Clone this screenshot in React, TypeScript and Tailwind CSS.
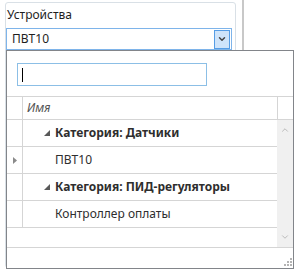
import { ChevronDown, ChevronUp } from 'lucide-react';

const rows = [
  { text: 'Категория: Датчики', group: true },
  { text: 'ПВТ10', current: true },
  { text: 'Категория: ПИД-регуляторы', group: true },
  { text: 'Контроллер оплаты' },
];

function ExpandedMark() {
  return (
    <svg width="6" height="6" viewBox="0 0 6 6" className="shrink-0">
      <polygon points="6,0 6,6 0,6" fill="#595959" />
    </svg>
  );
}

function RowMark() {
  return (
    <svg width="4" height="7" viewBox="0 0 4 7">
      <polygon points="0,0 4,3.5 0,7" fill="#8a8a8a" />
    </svg>
  );
}

function Grip() {
  const dots = [
    [6, 0],
    [3, 3], [6, 3],
    [0, 6], [3, 6], [6, 6],
  ];
  return (
    <svg width="8" height="8" viewBox="0 0 8 8">
      {dots.map(([x, y], i) => (
        <rect key={i} x={x} y={y} width="2" height="2" fill="#b4b4b4" />
      ))}
    </svg>
  );
}

export default function App() {
  return (
    <div className="relative w-[294px] h-[270px] bg-white overflow-hidden flex font-['Noto_Sans',sans-serif] text-[12px] text-[#333]">
      {/* group box */}
      <div className="ml-[5px] mt-[2px] w-[231px] h-[266px] border border-[#d9e0e6] rounded-[3px] pr-[3px]">
        <div className="h-[25px] pl-[1px] pt-[4px] text-[#1e1e1e] leading-[16px]">Устройства</div>
        <div className="h-[22px] border border-[#7eb4ea] flex items-center justify-between pl-[5px] pr-[1px] text-[#1e1e1e]">
          <span className="leading-[16px]">ПВТ10</span>
          <div className="w-[16px] h-[19px] border border-[#569de5] bg-[#cfe4fa] flex items-center justify-center">
            <ChevronDown className="w-[10px] h-[10px] text-[#444]" strokeWidth={3.5} />
          </div>
        </div>
      </div>
      <div className="ml-[6px] w-[2px] h-[50px] bg-[#c8c8c8]" />

      {/* dropdown popup */}
      <div className="absolute left-[6px] top-[50px] w-[288px] h-[219px] border border-[#82858a] bg-white flex flex-col">
        <div className="h-[45px] pl-[10px] pt-[12px]">
          <div className="w-[190px] h-[23px] border border-[#8cbfe6] flex items-center pl-[4px]">
            <div className="w-[1px] h-[14px] bg-black" />
          </div>
        </div>

        <div className="flex-1 flex flex-col border-t border-[#d5d5d5]">
          {/* header */}
          <div className="h-[23px] flex border-b border-[#d5d5d5]">
            <div className="w-[16px] border-r border-[#d5d5d5]" />
            <div className="flex-1 flex items-center pl-[4px] italic text-[#555]">Имя</div>
            <div className="w-[16px] border-l border-[#d5d5d5]" />
          </div>

          {/* body */}
          <div className="flex-1 flex">
            <div className="flex-1 flex flex-col">
              {rows.map((r, i) => (
                <div key={i} className="h-[27px] flex border-b border-[#d5d5d5]">
                  <div className="w-[16px] border-r border-[#d5d5d5] flex items-center justify-center">
                    {r.current && <RowMark />}
                  </div>
                  <div className="flex-1 flex items-center pl-[32px]">
                    {r.group ? (
                      <div className="flex items-center gap-[5px] -ml-[11px]">
                        <ExpandedMark />
                        <span className="font-bold text-[#2e2e2e]">{r.text}</span>
                      </div>
                    ) : (
                      <span className="text-[#2e2e2e]">{r.text}</span>
                    )}
                  </div>
                </div>
              ))}
            </div>
            <div className="w-[16px] bg-[#f0f0f0] flex flex-col items-center justify-between py-[5px]">
              <ChevronUp className="w-[10px] h-[10px] text-[#b0b0b0]" strokeWidth={2} />
              <ChevronDown className="w-[10px] h-[10px] text-[#b0b0b0]" strokeWidth={2} />
            </div>
          </div>

          {/* footer */}
          <div className="h-[21px] border-t border-[#d5d5d5] flex items-end justify-end pr-[1px] pb-[2px]">
            <Grip />
          </div>
        </div>
      </div>
    </div>
  );
}
